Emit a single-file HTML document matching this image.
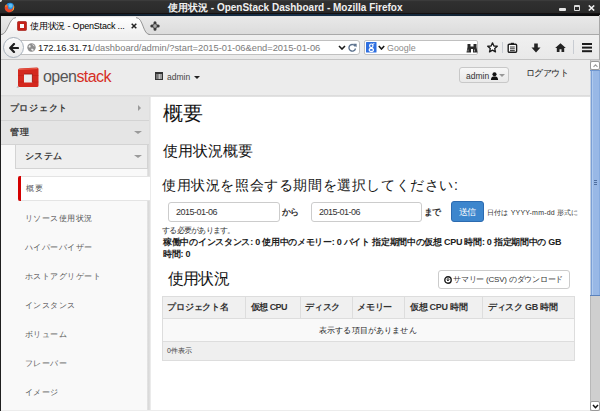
<!DOCTYPE html>
<html><head><meta charset="utf-8">
<style>
*{box-sizing:border-box;margin:0;padding:0}
html,body{width:600px;height:411px;overflow:hidden;background:#fff;font-family:"Liberation Sans",sans-serif;color:#333}
.a{position:absolute;white-space:nowrap}
.t{position:absolute;white-space:nowrap}
.item{left:25px;letter-spacing:0.45px;font-size:8px;color:#585858;line-height:10px}
.th{font-weight:bold;font-size:9px;color:#333;top:302px;line-height:11px}
.vl{position:absolute;top:297px;width:1px;height:21px;background:#dddddd}
</style></head><body>
<!-- ===== title bar ===== -->
<div class="a" style="left:0;top:0;width:600px;height:16px;background:linear-gradient(#404040,#303030 10%,#2c2c2c 60%,#222)"></div>
<div class="a" style="left:0;top:13px;width:600px;height:1px;background:#141010"></div>
<div class="a" style="left:0;top:14px;width:600px;height:1.5px;background:linear-gradient(90deg,#0a0a0a,#132638 25%,#16304a 50%,#132638 75%,#0a0a0a)"></div>
<div class="a" style="left:0;top:0;width:3px;height:3px;background:radial-gradient(circle at 0 0,#ddd 0 1.5px,transparent 2.5px)"></div>
<svg class="a" style="left:4px;top:1.5px" width="11" height="11" viewBox="0 0 11 11">
  <circle cx="5.5" cy="5.5" r="5" fill="#1f2a36"/>
  <circle cx="6" cy="4.8" r="4" fill="#2b8fdc"/>
  <circle cx="6.5" cy="3.8" r="2" fill="#5cc0f5"/>
  <path d="M9.8 3 C11 6 9.5 9.8 5.8 10.3 C2.5 10.6 0.5 8 0.7 5.3 C0.9 3.5 1.8 2.6 2.6 2.3 C2.2 3.3 2.6 4 3.2 4 C3.5 3 4.5 3.2 4.2 4.2 C3.6 5.8 4.2 7.6 6.2 7.6 C8 7.6 9.5 5.8 9.8 3 Z" fill="#e9492b"/>
  <path d="M9.8 3 C10.8 5.5 10.2 8.5 7.5 9.8 C9 8.3 9.6 6 9.8 3 Z" fill="#f6c83a"/>
  <path d="M1 5 C1.3 3.6 2 2.8 2.6 2.3 C2.3 3.3 2.6 4 3.2 4 Z" fill="#f59a1c"/>
</svg>
<div class="t" id="ttl" style="left:168px;top:1px;font-size:10px;font-weight:bold;color:#f0f0f0;line-height:13px">使用状況 - OpenStack Dashboard - Mozilla Firefox</div>
<div class="a" style="left:559px;top:8px;width:7px;height:3px;background:#e6e6e6;border-radius:1px"></div>
<div class="a" style="left:574px;top:5px;width:6px;height:6px;border:1.5px solid #dcdcdc;border-top-width:2.5px;border-radius:1px"></div>
<svg class="a" style="left:588px;top:5px" width="7" height="6" viewBox="0 0 7 6"><path d="M0.8 0.5 L6.2 5.5 M6.2 0.5 L0.8 5.5" stroke="#eeeeee" stroke-width="1.6"/></svg>

<!-- ===== tab strip ===== -->
<div class="a" style="left:0;top:16px;width:600px;height:19px;background:linear-gradient(#e9e9e9,#dcdcdc);border-bottom:1px solid #a9a9a9"></div>
<div class="a" style="left:0;top:15.5px;width:600px;height:1px;background:#e6e4e2"></div>
<svg class="a" style="left:0;top:16px" width="170" height="20" viewBox="0 0 170 20">
  <defs><linearGradient id="tg" x1="0" y1="0" x2="0" y2="1"><stop offset="0" stop-color="#ffffff"/><stop offset="1" stop-color="#efefef"/></linearGradient></defs>
  <path d="M1 18.6 C8 18.6 8.5 1.2 16 1.2 L136 1.2 C143.5 1.2 142.5 18.6 150 18.6 L150 20 L1 20 Z" fill="url(#tg)"/>
  <path d="M1 18.6 C8 18.6 8.5 1.6 16 1.6 M136 1.6 C143.5 1.6 142.5 18.6 150 18.6" fill="none" stroke="#8a8a8a" stroke-width="0.9"/>
</svg>
<svg class="a" style="left:17px;top:21px" width="10" height="10" viewBox="0 0 10 10">
  <rect x="0.5" y="0.5" width="9" height="9" rx="1" fill="#c42018" stroke="#9a140e" stroke-width="0.6"/>
  <rect x="3" y="3" width="4" height="4" fill="#fafafa"/>
</svg>
<div class="t" id="tabt" style="left:30px;top:19.5px;font-size:9px;letter-spacing:-0.2px;color:#000;line-height:13px">使用状況 - OpenStack ...</div>
<svg class="a" style="left:131px;top:23px" width="6" height="6" viewBox="0 0 6 6"><path d="M0.7 0.7 L5.3 5.3 M5.3 0.7 L0.7 5.3" stroke="#222" stroke-width="1.5"/></svg>
<svg class="a" style="left:150px;top:21px" width="10" height="10" viewBox="0 0 10 10">
  <path d="M5 1.8 V8.2 M1.8 5 H8.2" stroke="#3a3a3a" stroke-width="3" stroke-linecap="round"/>
  <path d="M5 3 V7 M3 5 H7" stroke="#c9c9c9" stroke-width="1.1"/>
</svg>

<!-- ===== nav bar ===== -->
<div class="a" style="left:0;top:35px;width:600px;height:25px;background:linear-gradient(#f0f0f0,#e9e9e9);border-bottom:1px solid #c4c4c4"></div>
<div class="a" style="left:18px;top:40px;width:342px;height:15px;background:#fff;border:1px solid #c0c0c0;border-radius:0 3px 3px 0"></div>
<div class="a" style="left:3px;top:37px;width:21px;height:21px;border-radius:50%;background:linear-gradient(#fbfbfb,#e9e9e9);border:1px solid #a6b0bb"></div>
<svg class="a" style="left:9px;top:43px" width="10" height="10" viewBox="0 0 10 10">
  <path d="M5 1 L1.2 5 L5 9 M1.5 5 H9" fill="none" stroke="#1e1e1e" stroke-width="2.2" stroke-linecap="round" stroke-linejoin="round"/>
</svg>
<svg class="a" style="left:27px;top:43px" width="9" height="9" viewBox="0 0 9 9">
  <circle cx="4.5" cy="4.5" r="4.2" fill="#8e8e8e"/>
  <path d="M2 2.5 C3 2 4 2.5 3.5 4 C3 5 2 4.5 1.5 4 Z M5 1.2 C6.5 1.5 7.5 2.5 7.5 3.5 C6.5 3 6 2.5 5 1.2 Z M4 6 C5.5 5.5 7 6 6.5 7.5 C5.5 8 4.5 7.5 4 6 Z" fill="#f0f0f0"/>
</svg>
<div class="t" id="url" style="left:38px;top:41.5px;font-size:9.3px;color:#7a7a7a;line-height:13px"><span style="color:#111">172.16.31.71</span>/dashboard/admin/?start=2015-01-06&amp;end=2015-01-06</div>
<svg class="a" style="left:338px;top:45px" width="8" height="5" viewBox="0 0 8 5"><path d="M1 1 L4 4 L7 1" fill="none" stroke="#1a1a1a" stroke-width="1.6"/></svg>
<svg class="a" style="left:348px;top:43px" width="9" height="9" viewBox="0 0 9 9">
  <path d="M7.3 3.5 A3.3 3.3 0 1 0 7.5 5.5" fill="none" stroke="#5b718d" stroke-width="1.3"/>
  <path d="M5.2 0.8 L8.6 0.8 L8.6 4.2 Z" fill="#5b718d"/>
</svg>
<div class="a" style="left:364px;top:40px;width:114px;height:15px;background:#fff;border:1px solid #c0c0c0;border-radius:2px"></div>
<svg class="a" style="left:366px;top:42px" width="11" height="11" viewBox="0 0 11 11">
  <rect x="0" y="0" width="10.5" height="10.5" rx="0.5" fill="#2f6fe0"/>
  <ellipse cx="5.3" cy="3.8" rx="1.7" ry="1.8" fill="none" stroke="#fff" stroke-width="1.2"/>
  <ellipse cx="5.3" cy="7.9" rx="2.1" ry="1.5" fill="none" stroke="#fff" stroke-width="1.2"/>
  <path d="M6.5 2.3 L8.3 1.6" stroke="#fff" stroke-width="1"/>
</svg>
<svg class="a" style="left:378px;top:45px" width="7" height="5" viewBox="0 0 7 5"><path d="M0.8 1 L3.5 4 L6.2 1" fill="none" stroke="#1a1a1a" stroke-width="1.6"/></svg>
<div class="t" id="ggl" style="left:387px;top:41.5px;font-size:8.9px;color:#8a8a8a;line-height:13px">Google</div>
<svg class="a" style="left:466px;top:43px" width="12" height="10" viewBox="0 0 12 10">
  <path d="M1.5 1 H4.5 V3.5 H7.5 V1 H10.5 V4 L11.5 9.5 H7 V6 H5 V9.5 H0.5 L1.5 4 Z" fill="#2a2a2a"/>
  <path d="M2 6.5 V8.5 M8.5 6.5 V8.5" stroke="#bbb" stroke-width="0.8"/>
</svg>
<svg class="a" style="left:487px;top:42px" width="11" height="11" viewBox="0 0 11 11">
  <path d="M5.5 0.8 L6.9 4 L10.3 4.2 L7.7 6.5 L8.5 9.9 L5.5 8.1 L2.5 9.9 L3.3 6.5 L0.7 4.2 L4.1 4 Z" fill="#fff" stroke="#1c1c1c" stroke-width="1.3" stroke-linejoin="round"/>
</svg>
<div class="a" style="left:502px;top:42px;width:1px;height:11px;background:#c8ccd2"></div>
<svg class="a" style="left:507px;top:42px" width="11" height="11" viewBox="0 0 11 11">
  <rect x="1.2" y="2.2" width="8.4" height="8" rx="1" fill="#fff" stroke="#1c1c1c" stroke-width="1.4"/>
  <path d="M3.8 0.8 H7 V3 H3.8 Z" fill="#1c1c1c"/>
  <path d="M3 5 H7.8 M3 6.8 H7.8 M3 8.6 H7.8" stroke="#1c1c1c" stroke-width="0.9"/>
</svg>
<svg class="a" style="left:531px;top:43px" width="10" height="10" viewBox="0 0 10 10">
  <path d="M3.2 0.5 H6.8 V4.5 H9.5 L5 9.5 L0.5 4.5 H3.2 Z" fill="#232323"/>
</svg>
<svg class="a" style="left:555px;top:43px" width="11" height="9" viewBox="0 0 11 9">
  <path d="M5.5 0.3 L10.8 5 L9.2 5 L9.2 9 L6.5 9 L6.5 6.2 L4.5 6.2 L4.5 9 L1.8 9 L1.8 5 L0.2 5 Z" fill="#232323"/>
</svg>
<div class="a" style="left:573px;top:40px;width:1px;height:14px;background:#c8ccd2"></div>
<div class="a" style="left:582px;top:43px;width:10px;height:2px;background:#1c1c1c;box-shadow:0 3.6px 0 #1c1c1c,0 7.2px 0 #1c1c1c"></div>

<div class="a" style="left:599px;top:15px;width:1px;height:45px;background:#a8a8a8"></div>
<!-- ===== page header ===== -->
<div class="a" style="left:1px;top:60px;width:589px;height:36px;background:#ececec;border-bottom:1px solid #d8d8d8"></div>
<svg class="a" style="left:16px;top:66px" width="24" height="23" viewBox="0 0 24 23">
  <path d="M3.5 2.5 Q2 2.5 2 4 L2 19.5 Q2 21 3.5 21 L21 21 Q22.5 21 22.5 19.5 L22.5 3 Q22.5 1.5 21 1.5 Z M8 8 L16.4 8 L16.4 16.4 L8 16.4 Z" fill="#d4281e" fill-rule="evenodd"/>
  <path d="M2.5 3.5 L21.5 2.5" stroke="#e8604c" stroke-width="1.2"/>
  <path d="M2 9.5 H8 M16.4 9.5 H22.5 M2 16 H8 M16.4 16 H22.5" stroke="#b01c14" stroke-width="0.6" opacity="0.6"/>
  <path d="M8 8 L16.4 8 L16.4 16.4" fill="none" stroke="#9c1a12" stroke-width="0.9"/>
  <path d="M1.5 20 L0.5 22 L3 21.5" fill="#9aa4ad" opacity="0.7"/>
</svg>
<div class="t" id="os" style="left:43px;top:67px;font-size:16px;letter-spacing:-0.55px;line-height:20px;color:#565656">open<span style="color:#d62e24">stack</span></div>
<svg class="a" style="left:155px;top:72px" width="8" height="8" viewBox="0 0 8 8">
  <rect x="0.5" y="0.5" width="7" height="7" fill="#9a9a9a" stroke="#333" stroke-width="1"/>
  <rect x="0" y="0" width="8" height="2" fill="#333"/>
  <rect x="3.6" y="2" width="0.9" height="5" fill="#eee"/>
  <rect x="1" y="2" width="2.6" height="5" fill="#777"/>
</svg>
<div class="t" id="adm" style="left:167px;top:71px;font-size:8.5px;color:#444;line-height:13px">admin</div>
<div class="a" style="left:194px;top:76px;width:0;height:0;border-left:3px solid transparent;border-right:3px solid transparent;border-top:3px solid #222"></div>
<div class="a" style="left:459px;top:67px;width:50px;height:16px;border:1px solid #c8c8c8;border-radius:3px;background:linear-gradient(#f7f7f7,#e9e9e9)"></div>
<div class="t" id="adm2" style="left:466px;top:70px;font-size:8.5px;color:#333;line-height:13px">admin</div>
<svg class="a" style="left:489.5px;top:71.5px" width="9" height="8" viewBox="0 0 9 9">
  <circle cx="4.5" cy="2.6" r="2.3" fill="#111"/><path d="M0.5 9 C0.5 5.5 2.5 5 4.5 5 C6.5 5 8.5 5.5 8.5 9 Z" fill="#111"/>
</svg>
<div class="a" style="left:499px;top:74px;width:0;height:0;border-left:3px solid transparent;border-right:3px solid transparent;border-top:3px solid #999"></div>
<div class="t" id="lo" style="left:525.5px;top:67px;font-size:9px;letter-spacing:-0.5px;color:#222;line-height:12px">ログアウト</div>

<!-- ===== sidebar ===== -->
<div class="a" style="left:1px;top:96px;width:149px;height:315px;background:#f9f9f9"></div>
<div class="a" style="left:147px;top:96px;width:4px;height:315px;background:linear-gradient(90deg,#e6e6e6,#d8d8d8 45%,#e6e6e6 80%,#f4f4f4)"></div>
<div class="a" style="left:1px;top:96px;width:148px;height:49px;background:#e5e5e5"></div>
<div class="a" style="left:1px;top:120px;width:148px;height:1px;background:#d3d3d3"></div>
<div class="a" style="left:1px;top:144px;width:148px;height:1px;background:#d3d3d3"></div>
<div class="t" id="pj" style="left:9.5px;top:101.5px;font-size:9px;letter-spacing:0.75px;font-weight:bold;color:#3c3c3c;line-height:12px">プロジェクト</div>
<div class="a" style="left:138px;top:105px;width:0;height:0;border-top:3px solid transparent;border-bottom:3px solid transparent;border-left:3.5px solid #9a9a9a"></div>
<div class="t" id="kr" style="left:10px;top:126px;font-size:9px;letter-spacing:0.5px;font-weight:bold;color:#3c3c3c;line-height:12px">管理</div>
<div class="a" style="left:134px;top:131px;width:0;height:0;border-left:4px solid transparent;border-right:4px solid transparent;border-top:3px solid #9a9a9a"></div>
<div class="a" style="left:15px;top:145px;width:133px;height:24px;background:#eeeeee;border:1px solid #d3d3d3;border-top:0"></div>
<div class="t" id="sys" style="left:24.5px;top:150px;font-size:9px;letter-spacing:0.65px;font-weight:bold;color:#3c3c3c;line-height:12px">システム</div>
<div class="a" style="left:134px;top:155px;width:0;height:0;border-left:4px solid transparent;border-right:4px solid transparent;border-top:3px solid #9a9a9a"></div>
<div class="a" style="left:18px;top:176px;width:132px;height:25px;background:#fff;border-top:1px solid #e4e4e4;border-bottom:1px solid #e4e4e4"></div>
<div class="a" style="left:18px;top:176px;width:3px;height:25px;background:#d40000;border-radius:2px 0 0 2px"></div>
<div class="t item" id="i0" style="top:184px;left:26px;letter-spacing:1.2px">概要</div>
<div class="t item" id="i1" style="top:214px">リソース使用状況</div>
<div class="t item" id="i2" style="top:243px">ハイパーバイザー</div>
<div class="t item" id="i3" style="top:272px">ホストアグリゲート</div>
<div class="t item" id="i4" style="top:301px">インスタンス</div>
<div class="t item" id="i5" style="top:330px">ボリューム</div>
<div class="t item" id="i6" style="top:359px">フレーバー</div>
<div class="t item" id="i7" style="top:388px">イメージ</div>
<div class="a" style="left:0;top:16px;width:1px;height:395px;background:#202020"></div>

<div class="a" style="left:1px;top:95px;width:589px;height:2px;background:linear-gradient(#dadada,#e4e4e4)"></div>
<!-- ===== content ===== -->
<div class="t" id="h1" style="left:163px;top:101px;font-size:20px;color:#151515;line-height:24px">概要</div>
<div class="t" id="h2" style="left:163px;top:141px;font-size:15px;color:#151515;line-height:19px">使用状況概要</div>
<div class="t" id="h3" style="left:162px;top:175.5px;font-size:14px;letter-spacing:0.6px;color:#151515;line-height:18px">使用状況を照会する期間を選択してください:</div>
<div class="a" style="left:168px;top:202px;width:112px;height:20px;border:1px solid #cccccc;border-radius:3px;background:#fff"></div>
<div class="t" id="d1" style="left:176px;top:206px;font-size:9px;letter-spacing:-0.5px;color:#333;line-height:12px">2015-01-06</div>
<div class="t" id="kara" style="left:282px;top:206px;font-size:9px;letter-spacing:-0.8px;font-weight:bold;color:#333;line-height:12px">から</div>
<div class="a" style="left:311px;top:202px;width:111px;height:20px;border:1px solid #cccccc;border-radius:3px;background:#fff"></div>
<div class="t" id="d2" style="left:319px;top:206px;font-size:9px;letter-spacing:-0.5px;color:#333;line-height:12px">2015-01-06</div>
<div class="t" id="made" style="left:423.5px;top:206px;font-size:9px;letter-spacing:-0.8px;font-weight:bold;color:#333;line-height:12px">まで</div>
<div class="a" style="left:451px;top:201px;width:33px;height:21px;border:1px solid #2c6bb0;border-radius:3px;background:#3d86cd"></div>
<div class="t" id="sub" style="left:459px;top:206px;font-size:9px;letter-spacing:-0.8px;color:#fff;line-height:12px">送信</div>
<div class="t" id="help" style="left:487px;top:206.5px;font-size:7px;letter-spacing:0.2px;color:#333;line-height:12px">日付は YYYY-mm-dd 形式に</div>
<div class="t" id="help2" style="left:162px;top:225px;font-size:8px;letter-spacing:-0.75px;color:#333;line-height:11px">する必要があります。</div>
<div class="t" id="l1" style="left:163px;top:237px;font-size:9px;letter-spacing:-0.28px;font-weight:bold;color:#222;line-height:11px">稼働中のインスタンス: 0 使用中のメモリー: 0 バイト 指定期間中の仮想 CPU 時間: 0 指定期間中の GB</div>
<div class="t" id="l2" style="left:163px;top:249px;font-size:9px;letter-spacing:-0.28px;font-weight:bold;color:#222;line-height:11px">時間: 0</div>
<div class="t" id="h4" style="left:168px;top:269px;font-size:16px;letter-spacing:-0.8px;color:#151515;line-height:19px">使用状況</div>
<div class="a" style="left:438px;top:270px;width:132px;height:19px;border:1px solid #cccccc;border-radius:3px;background:#fff"></div>
<svg class="a" style="left:444px;top:276px" width="8" height="8" viewBox="0 0 8 8">
  <circle cx="4" cy="4" r="3.2" fill="none" stroke="#1a1a1a" stroke-width="1.4"/><path d="M4 1.8 V4.6 M2.7 3.5 L4 4.8 L5.3 3.5" stroke="#1a1a1a" stroke-width="1" fill="none"/>
</svg>
<div class="t" id="dl" style="left:453px;top:274px;font-size:8px;letter-spacing:-0.22px;color:#333;line-height:11px">サマリー (CSV) のダウンロード</div>

<!-- ===== table ===== -->
<div class="a" style="left:162px;top:296px;width:413px;height:65px;border:1px solid #dddddd;background:#f9f9f9"></div>
<div class="a" style="left:163px;top:297px;width:411px;height:22px;background:#f0f0f0;border-bottom:1px solid #dddddd"></div>
<div class="a" style="left:163px;top:341px;width:411px;height:19px;background:#efefef;border-top:1px solid #dddddd"></div>
<div class="vl" style="left:245px"></div>
<div class="vl" style="left:300px"></div>
<div class="vl" style="left:352px"></div>
<div class="vl" style="left:404px"></div>
<div class="vl" style="left:482px"></div>
<div class="t th" id="th0" style="left:167px;letter-spacing:-0.15px">プロジェクト名</div>
<div class="t th" id="th1" style="left:251px;letter-spacing:-0.6px">仮想 CPU</div>
<div class="t th" id="th2" style="left:305px;letter-spacing:-0.2px">ディスク</div>
<div class="t th" id="th3" style="left:357px;letter-spacing:-0.2px">メモリー</div>
<div class="t th" id="th4" style="left:410px;letter-spacing:-0.3px">仮想 CPU 時間</div>
<div class="t th" id="th5" style="left:488px;letter-spacing:-0.3px">ディスク GB 時間</div>
<div class="t" id="empty" style="left:319px;top:325px;font-size:8px;letter-spacing:0.15px;color:#222;line-height:11px">表示する項目がありません</div>
<div class="t" id="cnt" style="left:167px;top:345px;font-size:7px;color:#444;line-height:11px">0件表示</div>

<!-- ===== scrollbar ===== -->
<div class="a" style="left:590px;top:60px;width:10px;height:351px;background:#cfcfcf;border-left:1px solid #b8b8b8"></div>
<div class="a" style="left:590px;top:61px;width:10px;height:9px;background:#fff;border:1px solid #9a9a9a;border-radius:2px"></div>
<svg class="a" style="left:592px;top:63px" width="7" height="5" viewBox="0 0 7 5"><path d="M1.5 3.8 L3.5 1.8 L5.5 3.8" fill="none" stroke="#9a9a9a" stroke-width="1.1"/></svg>
<div class="a" style="left:590px;top:70px;width:10px;height:226px;background:linear-gradient(90deg,#c3d0e2 0 1px,#7ba0d6 1px 2px,#afcaee 2px 3px,#98b8e6 3px 9px,#86abdf 9px);border-top:1px solid #6f96cf;border-bottom:1px solid #5a82bd"></div>
<div class="a" style="left:594px;top:180px;width:3px;height:1px;background:#4f6f9f;box-shadow:0 2px 0 #4f6f9f,0 4px 0 #4f6f9f"></div>
<div class="a" style="left:590px;top:401px;width:10px;height:10px;background:#fff;border:1px solid #9a9a9a;border-radius:2px"></div>
<svg class="a" style="left:592px;top:404px" width="7" height="5" viewBox="0 0 7 5"><path d="M1 1 L3.5 3.7 L6 1" fill="none" stroke="#111" stroke-width="1.5"/></svg>
<div class="a" style="left:1px;top:410px;width:589px;height:1px;background:#ececec"></div>
</body></html>
